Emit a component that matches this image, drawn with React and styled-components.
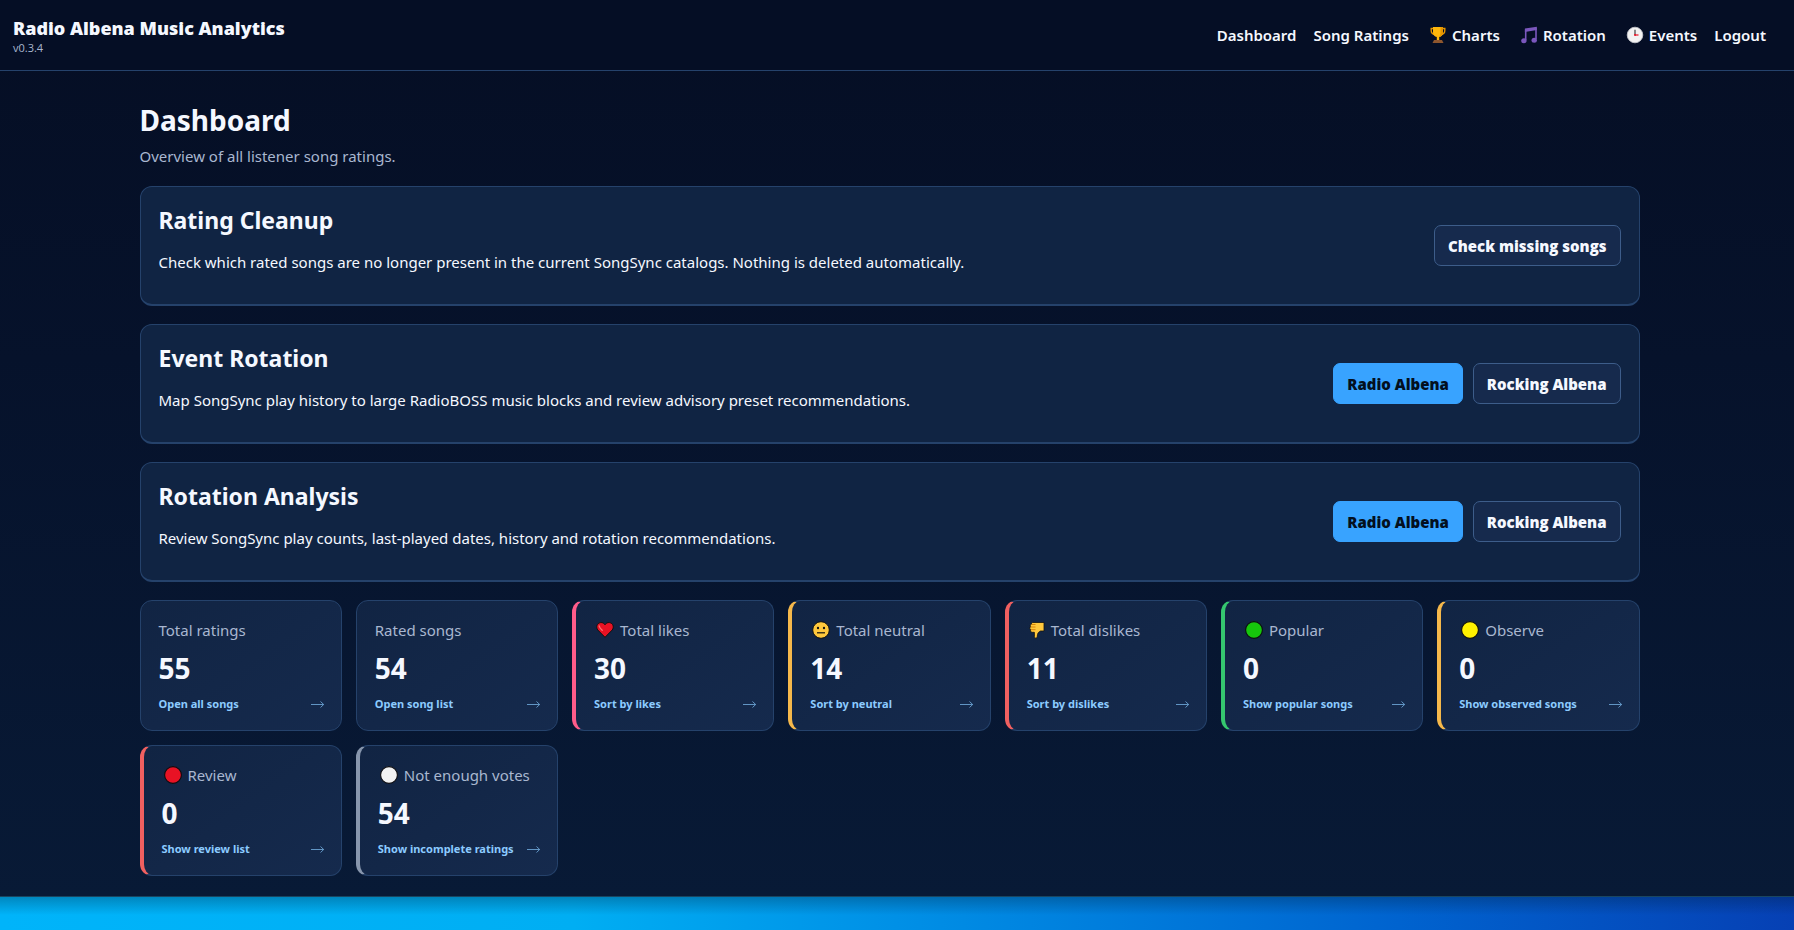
import React from "react";
import styled, { createGlobalStyle } from "styled-components";

const GlobalStyle = createGlobalStyle`
    * {
        box-sizing: border-box;
    }
    body {
        margin: 0;
        color: #f5f8ff;
        font-family: "Segoe UI", "Noto Sans", "Open Sans", sans-serif;
        font-size: 15px;
        line-height: 24px;
    }
`

const Layout = styled.div`
    display: flex;
    flex-direction: column;
    min-height: 100vh;
`

const Page = styled.div`
    background: linear-gradient(180deg, #050e24 0%, #06122b 40%, #081a36 100%);
    border-bottom: 1px solid #1b4660;
`

const Strip = styled.div`
    flex: 1;
    min-height: 33px;
    background:
        linear-gradient(180deg, rgba(0, 20, 40, 0.28), rgba(0, 20, 40, 0) 18px),
        linear-gradient(90deg, #00b4fa 0%, #00aef3 32%, #0090e6 50%, #0063cf 78%, #0640b4 100%);
`

const Header = styled.header`
    display: flex;
    justify-content: space-between;
    align-items: center;
    height: 71px;
    padding: 0 28px 0 13px;
    background: #050e25;
    border-bottom: 1px solid #25426b;
`

const Brand = styled.div`
    padding-top: 2px;
    font-family: "Segoe UI", "Open Sans", sans-serif;
    font-size: 18px;
    font-weight: 800;
    line-height: 24px;
    small {
        display: block;
        color: #a9b7d0;
        font-size: 11px;
        font-weight: 400;
        line-height: 16px;
    }
`

const Nav = styled.nav`
    display: flex;
    gap: 17px;
`

const NavLink = styled.a`
    display: flex;
    align-items: center;
    gap: 5px;
    color: #f5f8ff;
    font-weight: 600;
    text-decoration: none;
    svg {
        margin-left: 3px;
    }
`

const Main = styled.main`
    max-width: 1515px;
    margin: 0 auto;
    padding: 28px 15px 20px 0;
`

const Title = styled.h1`
    margin: 0;
    font-size: 28px;
    font-weight: 700;
    line-height: 42px;
`

const Subtitle = styled.p`
    margin: 3px 0 18px;
    color: #a9b7d0;
`

const Panel = styled.section`
    display: flex;
    justify-content: space-between;
    align-items: center;
    min-height: 120px;
    margin-bottom: 18px;
    padding: 0 18px;
    background: #102443;
    border: 1px solid #25426b;
    border-bottom-width: 2px;
    border-radius: 12px;
    h2 {
        margin: 0 0 14px;
        font-size: 23px;
        font-weight: 700;
        line-height: 32px;
    }
    p {
        margin: 0 0 14px;
    }
`

const Actions = styled.div`
    display: flex;
    gap: 10px;
`

const Button = styled.button`
    height: 41px;
    padding: 0 13px;
    border: 1px solid ${props => props.$primary ? "#38a3ff" : "#3d5d8a"};
    border-radius: 7px;
    background: ${props => props.$primary ? "#38a3ff" : "#162a4d"};
    color: ${props => props.$primary ? "#03101f" : "#f5f8ff"};
    font-family: "Segoe UI", "Open Sans", sans-serif;
    font-size: 15px;
    font-weight: 800;
    cursor: pointer;
`

const Stats = styled.div`
    display: grid;
    grid-template-columns: repeat(auto-fill, minmax(190px, 1fr));
    gap: 14px;
`

const StatCard = styled.a`
    display: block;
    height: 131px;
    padding: 17px 16px 0 18px;
    background: linear-gradient(145deg, #112443, #152a4d);
    border: 1px solid #25426b;
    border-left: ${props => props.$accent ? `4px solid ${props.$accent}` : "1px solid #25426b"};
    border-radius: 12px;
    color: inherit;
    text-decoration: none;
`

const Label = styled.div`
    display: flex;
    align-items: center;
    gap: 6px;
    color: #a9b7d0;
    svg {
        margin-left: 2px;
    }
`

const Value = styled.div`
    margin: 6px 0 8px;
    font-size: 28px;
    font-weight: 700;
    line-height: 40px;
`

const More = styled.div`
    display: flex;
    justify-content: space-between;
    color: #8ccbff;
    font-size: 11px;
    font-weight: 700;
    line-height: 16px;
    white-space: nowrap;
`

const Arrow = () => (
    <svg width="14" height="16" viewBox="0 0 14 16" fill="none" stroke="#6195c4" aria-hidden="true">
        <path d="M0 8.5h13M9.5 5.5l3.2 3-3.2 3" />
    </svg>
)

const Trophy = () => (
    <svg width="18" height="18" viewBox="0 0 18 18" aria-hidden="true">
        <path d="M4.500 2.500H2.200v2C2.200 7 3.500 8.300 6 8.500M13.500 2.500h2.300v2c0 2.500-1.300 3.800-3.800 4" fill="none" stroke="#e69500" strokeWidth="1.400" />
        <path d="M4 1h10v5.500c0 2.500-1.500 4-3.800 4.500v3H7.800v-3C5.500 10.500 4 9 4 6.500z" fill="#ffb70b" />
        <path d="M11.500 1H14v5.500c0 2.500-1.500 4-3.800 4.500 1-1.500 1.300-3.500 1.300-5z" fill="#e69500" />
        <path d="M5 14h8l1.500 3H3.500z" fill="#8e562e" />
    </svg>
)

const Notes = () => (
    <svg width="18" height="18" viewBox="0 0 18 18" aria-hidden="true">
        <path d="M5.700 14V3.200M16 13V1.800" fill="none" stroke="#7b57bd" strokeWidth="1.600" />
        <path d="M4.900 2.600L16.800.8v3.300L4.900 5.900z" fill="#7b57bd" />
        <ellipse cx="3.900" cy="14.700" rx="2.700" ry="2.500" fill="#7b57bd" />
        <ellipse cx="14.200" cy="14.300" rx="2.700" ry="2.500" fill="#7b57bd" />
    </svg>
)

const Clock = () => (
    <svg width="18" height="18" viewBox="0 0 18 18" aria-hidden="true">
        <circle cx="9" cy="9" r="7.800" fill="#f2f2f2" stroke="#c9c9cf" strokeWidth="0.800" />
        <path d="M9 3.800V9" stroke="#333" strokeWidth="1.100" />
        <path d="M9 9h3.500" stroke="#e81224" strokeWidth="1.200" />
        <circle cx="9" cy="9" r="1" fill="#e81224" />
    </svg>
)

const Heart = () => (
    <svg width="18" height="18" viewBox="0 0 18 18" aria-hidden="true">
        <path d="M9 16.300L1.800 9C-.3 6.500.8 2.200 4.500 1.600 6.500 1.300 8.200 2.300 9 3.800c.8-1.500 2.500-2.500 4.500-2.200 3.700.6 4.800 4.900 2.700 7.400z" fill="#e81224" stroke="#111" strokeWidth="1" />
        <path d="M3.200 5c.2 1.800 1.300 2.800 3 4.200" fill="none" stroke="#ff6f6f" strokeWidth="1.400" strokeLinecap="round" />
    </svg>
)

const Face = () => (
    <svg width="18" height="18" viewBox="0 0 18 18" aria-hidden="true">
        <circle cx="9" cy="9" r="8.300" fill="#ffc83d" stroke="#111" strokeWidth="1" />
        <ellipse cx="6" cy="7" rx="1.100" ry="1.300" fill="#111" />
        <ellipse cx="12" cy="7" rx="1.100" ry="1.300" fill="#111" />
        <path d="M5 11.800h8" stroke="#111" strokeWidth="1.200" />
    </svg>
)

const ThumbDown = () => (
    <svg width="16" height="18" viewBox="0 0 16 18" aria-hidden="true">
        <path d="M3.500 1.500h11.500v8.500h-3.500c-1.800.8-2.700 2-3 3.500l-.3 2.500c-.3 1.700-2.800 1.500-2.800-.3V11.300H3.200C1.600 11.200 1.200 9.800 1.800 8.800.6 8.200.5 6.600 1.500 5.900.9 4.700 1.400 3.600 2.400 3.300c0-1 .4-1.600 1.100-1.800z" fill="#ffc83d" stroke="#111" strokeWidth="0.800" />
        <path d="M1.800 6H6.500M2 8.700H6.500M2.600 3.500H6.500" stroke="#d67d00" strokeWidth="0.900" />
    </svg>
)

const Dot = ({ color }) => (
    <svg width="18" height="18" viewBox="0 0 18 18" aria-hidden="true">
        <circle cx="9" cy="9" r="8.400" fill={color} stroke="#0c0c10" strokeWidth="1.100" />
    </svg>
)

const links = [
    { text: "Dashboard" },
    { text: "Song Ratings" },
    { text: "Charts", icon: <Trophy /> },
    { text: "Rotation", icon: <Notes /> },
    { text: "Events", icon: <Clock /> },
    { text: "Logout" },
]

const stats = [
    { label: "Total ratings", value: 55, more: "Open all songs" },
    { label: "Rated songs", value: 54, more: "Open song list" },
    { label: "Total likes", value: 30, more: "Sort by likes", accent: "#ff5c8a", icon: <Heart /> },
    { label: "Total neutral", value: 14, more: "Sort by neutral", accent: "#f5b84b", icon: <Face /> },
    { label: "Total dislikes", value: 11, more: "Sort by dislikes", accent: "#f06060", icon: <ThumbDown /> },
    { label: "Popular", value: 0, more: "Show popular songs", accent: "#35c76f", icon: <Dot color="#16c60c" /> },
    { label: "Observe", value: 0, more: "Show observed songs", accent: "#f5b84b", icon: <Dot color="#fff100" /> },
    { label: "Review", value: 0, more: "Show review list", accent: "#f06060", icon: <Dot color="#e81224" /> },
    { label: "Not enough votes", value: 54, more: "Show incomplete ratings", accent: "#8796ad", icon: <Dot color="#f2f2f2" /> },
]

const StationPanel = ({ title, text }) => (
    <Panel>
        <div>
            <h2>{title}</h2>
            <p>{text}</p>
        </div>
        <Actions>
            <Button type="button" $primary>Radio Albena</Button>
            <Button type="button">Rocking Albena</Button>
        </Actions>
    </Panel>
)

const App = () => {
    return (
        <Layout>
            <GlobalStyle />
            <Page>
                <Header>
                    <Brand>
                        Radio Albena Music Analytics
                        <small>v0.3.4</small>
                    </Brand>
                    <Nav>
                        {links.map(link => (
                            <NavLink href="#" key={link.text}>{link.icon}{link.text}</NavLink>
                        ))}
                    </Nav>
                </Header>
                <Main>
                    <Title>Dashboard</Title>
                    <Subtitle>Overview of all listener song ratings.</Subtitle>
                    <Panel>
                        <div>
                            <h2>Rating Cleanup</h2>
                            <p>Check which rated songs are no longer present in the current SongSync catalogs. Nothing is deleted automatically.</p>
                        </div>
                        <Actions>
                            <Button type="button">Check missing songs</Button>
                        </Actions>
                    </Panel>
                    <StationPanel
                        title="Event Rotation"
                        text="Map SongSync play history to large RadioBOSS music blocks and review advisory preset recommendations."
                    />
                    <StationPanel
                        title="Rotation Analysis"
                        text="Review SongSync play counts, last-played dates, history and rotation recommendations."
                    />
                    <Stats>
                        {stats.map(stat => (
                            <StatCard href="#" key={stat.label} $accent={stat.accent}>
                                <Label>{stat.icon}{stat.label}</Label>
                                <Value>{stat.value}</Value>
                                <More>{stat.more}<Arrow /></More>
                            </StatCard>
                        ))}
                    </Stats>
                </Main>
            </Page>
            <Strip />
        </Layout>
    )
}

export default App;
